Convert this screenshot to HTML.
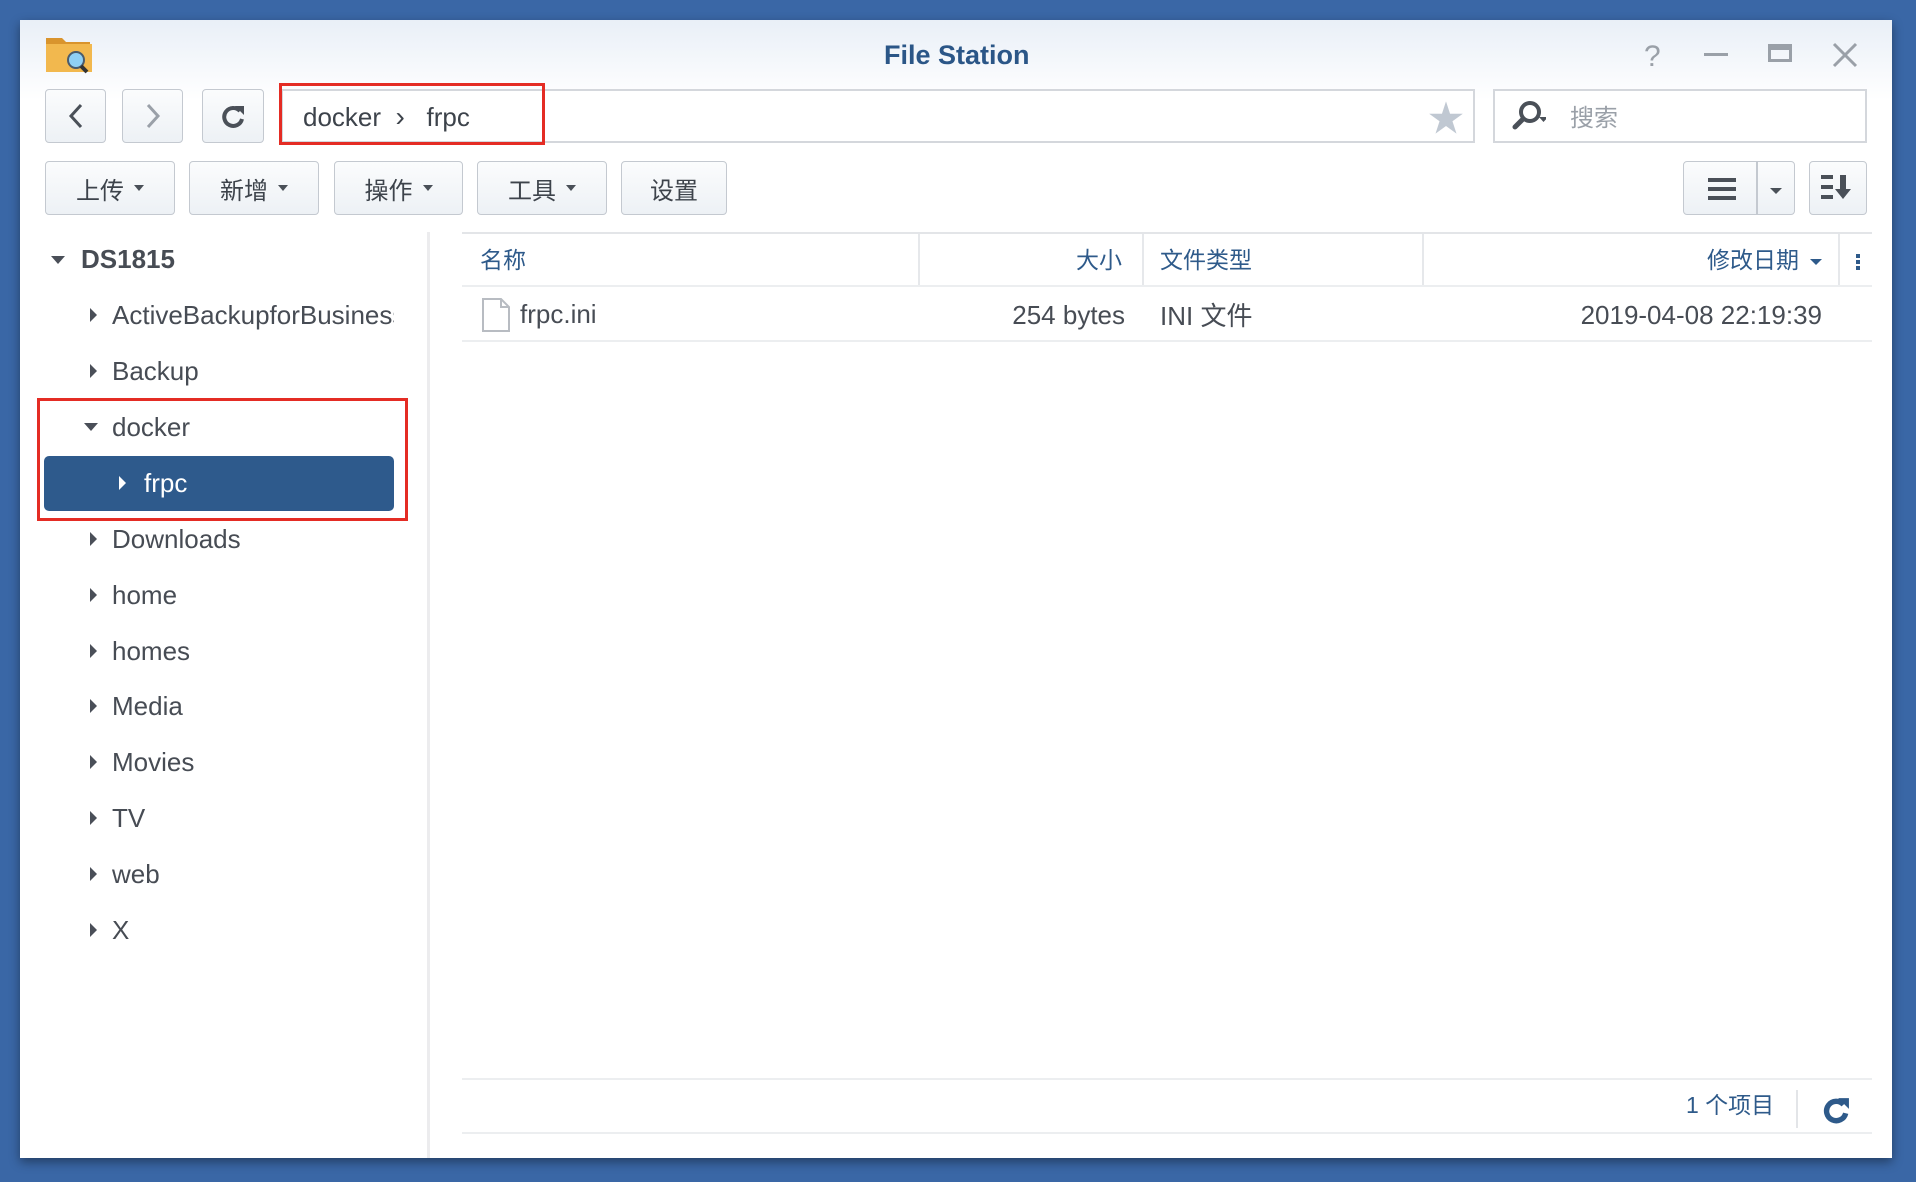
<!DOCTYPE html>
<html><head><meta charset="utf-8"><style>
*{box-sizing:border-box;margin:0;padding:0}
body{width:1916px;height:1182px;overflow:hidden;background:#3a67a6;font-family:"Liberation Sans","Noto Sans CJK SC",sans-serif;position:relative}
.win{position:absolute;left:20px;top:20px;width:1872px;height:1138px;background:#fff;box-shadow:0 4px 10px rgba(0,0,0,.4)}
.hdr{position:absolute;left:0;top:0;width:1872px;height:80px;background:linear-gradient(#e9eff7,#fff)}
.a{position:absolute}
.btn{position:absolute;border:1px solid #c4c9d0;border-radius:4px;background:linear-gradient(#fbfcfd,#edf1f5);color:#3d434b;font-size:24px;display:flex;align-items:center;justify-content:center}
.car{display:inline-block;width:0;height:0;border-left:5px solid transparent;border-right:5px solid transparent;border-top:6px solid #4a5058;margin-left:10px}
.tree{position:absolute;font-size:26px;color:#474c54;white-space:nowrap}
.tri{position:absolute;width:0;height:0;border-top:7px solid transparent;border-bottom:7px solid transparent;border-left:7px solid #4a4f58}
.trid{position:absolute;width:0;height:0;border-left:7px solid transparent;border-right:7px solid transparent;border-top:8px solid #4a4f58}
.hd{position:absolute;top:221px;font-size:23px;color:#2e5a8a}
.vl{position:absolute;width:2px;background:#e6e8eb}
.cell{position:absolute;top:279px;font-size:26px;color:#474c54}
</style></head><body>
<div class="win">
<div class="hdr"></div>
<svg class="a" style="left:24px;top:14px" width="50" height="42" viewBox="0 0 50 42"><path d="M2 4h16l4 4h24v30H2z" fill="#d9942d"/><rect x="2" y="10" width="46" height="28" fill="#f2b84e"/><circle cx="32" cy="26" r="8" fill="#8fd0f5" stroke="#4a5b6c" stroke-width="2"/><path d="M37 32l6 6" stroke="#333" stroke-width="4"/></svg>
<div class="a" style="left:864px;top:20px;font-size:27px;font-weight:bold;color:#2b5687">File Station</div>
<div class="a" style="left:1624px;top:20px;font-size:30px;color:#9aa0a8">?</div>
<div class="a" style="left:1684px;top:33px;width:24px;height:3px;background:#9aa0a8"></div>
<div class="a" style="left:1748px;top:24px;width:24px;height:18px;border:3px solid #9aa0a8;border-top-width:6px"></div>
<svg class="a" style="left:1812px;top:22px" width="26" height="26"><path d="M2 2L24 24M24 2L2 24" stroke="#9aa0a8" stroke-width="3"/></svg>
<div class="btn" style="left:25px;top:69px;width:61px;height:54px"><svg width="16" height="26"><path d="M13 2L3 13l10 11" stroke="#4a5058" stroke-width="3" fill="none"/></svg></div>
<div class="btn" style="left:102px;top:69px;width:61px;height:54px"><svg width="16" height="26"><path d="M3 2l10 11L3 24" stroke="#9aa0a8" stroke-width="3" fill="none"/></svg></div>
<div class="btn" style="left:182px;top:69px;width:62px;height:54px"><svg width="26" height="26" viewBox="0 0 26 26"><path d="M20 8A9 9 0 1 0 22 16" stroke="#4a5058" stroke-width="4" fill="none"/><path d="M15 3h9v9z" fill="#4a5058"/></svg></div>
<div class="a" style="left:261px;top:69px;width:1194px;height:54px;border:2px solid #d4d7dc;background:#fff"></div>
<div class="a" style="left:283px;top:82px;font-size:26px;color:#3d434b">docker&nbsp;&nbsp;<span style="font-size:28px;line-height:20px">›</span>&nbsp;&nbsp;&nbsp;frpc</div>
<div class="a" style="left:259px;top:63px;width:266px;height:62px;border:3px solid #e42c24"></div>
<div class="a" style="left:1408px;top:70px;font-size:36px;color:#c0c8d2">★</div>
<div class="a" style="left:1473px;top:69px;width:374px;height:54px;border:2px solid #d4d7dc;background:#fff"></div>
<svg class="a" style="left:1490px;top:79px" width="36" height="34"><circle cx="20" cy="13" r="9" stroke="#4a5058" stroke-width="4" fill="none"/><path d="M13 20l-8 8" stroke="#4a5058" stroke-width="5" stroke-linecap="round"/><path d="M29 18h9l-4.5 5z" fill="#4a5058"/></svg>
<div class="a" style="left:1550px;top:78px;font-size:24px;color:#9aa0a8">搜索</div>
<div class="btn" style="left:25px;top:141px;width:130px;height:54px">上传<span class="car"></span></div>
<div class="btn" style="left:169px;top:141px;width:130px;height:54px">新增<span class="car"></span></div>
<div class="btn" style="left:314px;top:141px;width:129px;height:54px">操作<span class="car"></span></div>
<div class="btn" style="left:457px;top:141px;width:130px;height:54px">工具<span class="car"></span></div>
<div class="btn" style="left:601px;top:141px;width:106px;height:54px">设置</div>
<div class="btn" style="left:1663px;top:141px;width:112px;height:54px"></div>
<div class="a" style="left:1736px;top:142px;width:2px;height:52px;background:#c4c9d0"></div>
<div class="a" style="left:1688px;top:158px;width:28px;height:4px;background:#4a5058;box-shadow:0 9px 0 #4a5058,0 18px 0 #4a5058"></div>
<div class="a" style="left:1750px;top:168px;border-left:6px solid transparent;border-right:6px solid transparent;border-top:6px solid #4a5058"></div>
<div class="btn" style="left:1789px;top:141px;width:58px;height:54px"><svg width="34" height="26"><path d="M0 2h12M0 12h12M0 22h12" stroke="#4a5058" stroke-width="4"/><path d="M22 0v16" stroke="#4a5058" stroke-width="6"/><path d="M14 14h16l-8 10z" fill="#4a5058"/></svg></div>
<div class="vl" style="left:407px;top:212px;height:926px;background:#ececee;width:3px"></div>
<div class="trid" style="left:31px;top:236px"></div>
<div class="tree" style="left:61px;top:224px;font-weight:bold">DS1815</div>
<div class="tri" style="left:70px;top:288px"></div><div class="tree" style="left:92px;top:280px;width:282px;overflow:hidden">ActiveBackupforBusiness</div>
<div class="tri" style="left:70px;top:344px"></div><div class="tree" style="left:92px;top:336px">Backup</div>
<div class="trid" style="left:64px;top:403px"></div><div class="tree" style="left:92px;top:392px">docker</div>
<div class="a" style="left:24px;top:436px;width:350px;height:55px;background:#2e5a8c;border-radius:5px"></div>
<div class="tri" style="left:99px;top:456px;border-left-color:#fff"></div><div class="tree" style="left:124px;top:448px;color:#fff">frpc</div>
<div class="a" style="left:17px;top:378px;width:371px;height:123px;border:3px solid #e42c24"></div>
<div class="tri" style="left:70px;top:512px"></div><div class="tree" style="left:92px;top:504px">Downloads</div>
<div class="tri" style="left:70px;top:568px"></div><div class="tree" style="left:92px;top:560px">home</div>
<div class="tri" style="left:70px;top:624px"></div><div class="tree" style="left:92px;top:616px">homes</div>
<div class="tri" style="left:70px;top:679px"></div><div class="tree" style="left:92px;top:671px">Media</div>
<div class="tri" style="left:70px;top:735px"></div><div class="tree" style="left:92px;top:727px">Movies</div>
<div class="tri" style="left:70px;top:791px"></div><div class="tree" style="left:92px;top:783px">TV</div>
<div class="tri" style="left:70px;top:847px"></div><div class="tree" style="left:92px;top:839px">web</div>
<div class="tri" style="left:70px;top:903px"></div><div class="tree" style="left:92px;top:895px">X</div>
<div class="a" style="left:442px;top:212px;width:1410px;height:2px;background:#e3e5e8"></div>
<div class="a" style="left:442px;top:265px;width:1410px;height:2px;background:#eceef0"></div>
<div class="a" style="left:442px;top:320px;width:1410px;height:2px;background:#eceef0"></div>
<div class="vl" style="left:898px;top:214px;height:51px"></div>
<div class="vl" style="left:1122px;top:214px;height:51px"></div>
<div class="vl" style="left:1402px;top:214px;height:51px"></div>
<div class="vl" style="left:1818px;top:214px;height:51px"></div>
<div class="hd" style="left:460px">名称</div>
<div class="hd" style="left:1056px">大小</div>
<div class="hd" style="left:1140px">文件类型</div>
<div class="hd" style="left:1687px">修改日期</div>
<div class="a" style="left:1790px;top:239px;border-left:6px solid transparent;border-right:6px solid transparent;border-top:6px solid #2e5a8a"></div>
<div class="a" style="left:1836px;top:234px;width:4px;height:4px;background:#2e5a8a;box-shadow:0 6px 0 #2e5a8a,0 12px 0 #2e5a8a"></div>
<svg class="a" style="left:462px;top:278px" width="28" height="34"><path d="M1 1h18l8 8v24H1z" fill="#fff" stroke="#b8bcc2" stroke-width="2"/><path d="M19 1v8h8" fill="none" stroke="#b8bcc2" stroke-width="2"/></svg>
<div class="cell" style="left:500px">frpc.ini</div>
<div class="cell" style="left:905px;width:200px;text-align:right;top:280px">254 bytes</div>
<div class="cell" style="left:1140px;top:276px">INI 文件</div>
<div class="cell" style="left:1500px;width:302px;text-align:right;top:280px">2019-04-08 22:19:39</div>
<div class="a" style="left:442px;top:1058px;width:1410px;height:2px;background:#eceef0"></div>
<div class="a" style="left:442px;top:1112px;width:1410px;height:2px;background:#eceef0"></div>
<div class="a" style="left:1666px;top:1066px;font-size:23px;color:#2e5a8a">1 个项目</div>
<div class="a" style="left:1776px;top:1070px;width:2px;height:38px;background:#e3e5e8"></div>
<svg class="a" style="left:1802px;top:1076px" width="28" height="28" viewBox="0 0 26 26"><path d="M20 8A9 9 0 1 0 22 16" stroke="#2e5a8a" stroke-width="5" fill="none"/><path d="M15 2h10v10z" fill="#2e5a8a"/></svg>
</div>
</body></html>
